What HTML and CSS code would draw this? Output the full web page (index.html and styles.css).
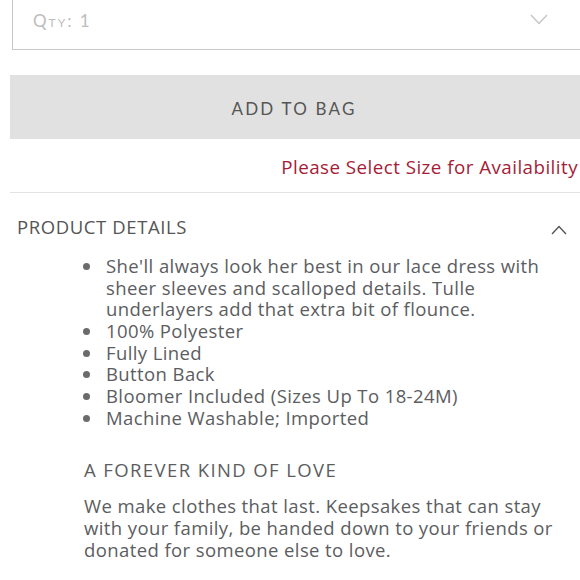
FILE: index.html
```html
<!DOCTYPE html>
<html>
<head>
<meta charset="utf-8">
<link rel="stylesheet" href="styles.css">
</head>
<body>
<div class="page">
  <div class="qty">
    <span class="qty-label">Qty: 1</span>
    <svg class="chev-down" width="18" height="11" viewBox="0 0 18 11"><path d="M1 1 L9 9.5 L17 1" fill="none" stroke="#c4c4c4" stroke-width="1.3"/></svg>
  </div>
  <div class="add-btn">ADD TO BAG</div>
  <div class="notice">Please Select Size for Availability</div>
  <div class="divider"></div>
  <div class="acc-head">
    <span class="acc-title">PRODUCT DETAILS</span>
    <svg class="chev-up" width="16" height="11" viewBox="0 0 16 11"><path d="M1 10 L8 2.5 L15 10" fill="none" stroke="#555" stroke-width="1.4"/></svg>
  </div>
  <ul class="details">
    <li>She'll always look her best in our lace dress with sheer sleeves and scalloped details. Tulle underlayers add that extra bit of flounce.</li>
    <li>100% Polyester</li>
    <li>Fully Lined</li>
    <li>Button Back</li>
    <li>Bloomer Included (Sizes Up To 18-24M)</li>
    <li>Machine Washable; Imported</li>
  </ul>
  <div class="story">
    <h3 class="story-title">A FOREVER KIND OF LOVE</h3>
    <p class="story-text">We make clothes that last. Keepsakes that can stay with your family, be handed down to your friends or donated for someone else to love.</p>
  </div>
</div>
</body>
</html>
```
FILE: styles.css
```css
html, body {
  margin: 0;
  padding: 0;
  background: #fff;
  overflow: hidden;
}
.page {
  width: 580px;
  font-family: "Open Sans", "Lato", sans-serif;
  color: #5c5d5f;
}
.qty {
  margin: 0 -20px 0 12px;
  height: 50px;
  border: 1px solid #c9c9c9;
  border-top: none;
  border-right: none;
  box-sizing: border-box;
  display: flex;
  align-items: center;
  padding: 0 0 0 20px;
  position: relative;
  font-family: "Lato", sans-serif;
}
.qty-label {
  font-variant: small-caps;
  font-size: 17px;
  letter-spacing: 2px;
  color: #bdbdbd;
  margin-top: -8px;
}
.chev-down {
  position: absolute;
  left: 517px;
  top: 14px;
}
.add-btn {
  margin: 25px 0 0 10px;
  height: 64px;
  background: #e1e1e1;
  display: flex;
  align-items: center;
  justify-content: center;
  font-family: "Lato", sans-serif;
  font-size: 17px;
  letter-spacing: 2.2px;
  color: #555;
  padding-right: 2px;
  padding-top: 2px;
  box-sizing: border-box;
}
.notice {
  margin-top: 16px;
  text-align: right;
  padding-right: 2px;
  color: #a51c38;
  font-size: 18.8px;
  letter-spacing: 0.45px;
  line-height: 24px;
}
.divider {
  margin: 13px 0 0 10px;
  height: 1px;
  background: #e3e3e3;
}
.acc-head {
  display: flex;
  justify-content: space-between;
  align-items: center;
  padding: 21px 13px 0 17px;
  height: 24px;
}
.acc-title {
  font-size: 18.5px;
  letter-spacing: 0.6px;
  color: #555;
}
.chev-up {
  margin-top: 7px;
}
.details {
  list-style: none;
  margin: 17px 0 0 0;
  padding: 0 30px 0 83px;
  font-size: 18.5px;
  letter-spacing: 0.4px;
  line-height: 21.65px;
}
.details li {
  display: flex;
  gap: 16px;
}
.details li::before {
  content: "";
  flex: none;
  width: 7px;
  height: 7px;
  border-radius: 50%;
  background: #6a6b6d;
  margin-top: 8px;
}
.story {
  padding: 0 20px 0 84px;
}
.story-title {
  margin: 30px 0 0 0;
  font-weight: normal;
  font-size: 18.5px;
  letter-spacing: 1.4px;
  line-height: 24px;
}
.story-text {
  margin: 13px 0 0 0;
  font-size: 18.5px;
  letter-spacing: 0.4px;
  line-height: 21.65px;
}
```
